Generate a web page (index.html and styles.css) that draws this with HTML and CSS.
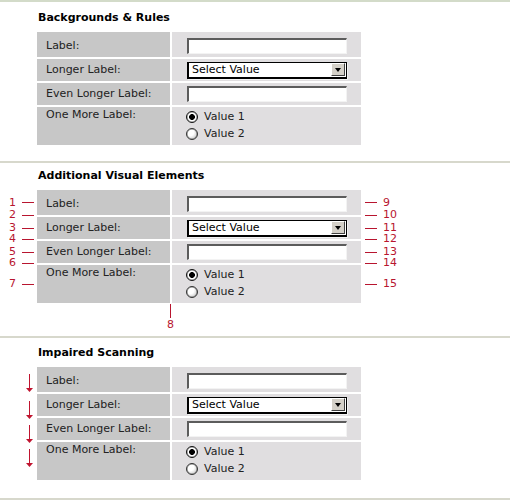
FILE: index.html
```html
<!DOCTYPE html>
<html lang="en">
<head>
<meta charset="utf-8">
<title>Form Layouts</title>
<link rel="stylesheet" href="styles.css">
</head>
<body>

<section class="block block--first">
  <h2 class="title">Backgrounds &amp; Rules</h2>
  <div class="form">
    <div class="row row--first">
      <div class="cell label">Label:</div>
      <div class="cell value"><input class="text" type="text"></div>
    </div>
    <div class="row">
      <div class="cell label">Longer Label:</div>
      <div class="cell value"><span class="select"><select><option>Select Value</option></select><span class="select-btn"></span></span></div>
    </div>
    <div class="row">
      <div class="cell label">Even Longer Label:</div>
      <div class="cell value"><input class="text" type="text"></div>
    </div>
    <div class="row row--last">
      <div class="cell label">One More Label:</div>
      <div class="cell value">
        <label class="radio-line"><input class="radio" type="radio" name="r1" checked>Value 1</label>
        <label class="radio-line"><input class="radio" type="radio" name="r1">Value 2</label>
      </div>
    </div>
  </div>
</section>

<section class="block block--annotated">
  <h2 class="title">Additional Visual Elements</h2>
  <div class="form">
    <div class="row row--first">
      <div class="cell label">Label:</div>
      <div class="cell value"><input class="text" type="text"></div>
      <span class="note note--l note--mid"><span class="num">1</span><span class="dash"></span></span>
      <span class="note note--l note--sep"><span class="num">2</span><span class="dash"></span></span>
      <span class="note note--r note--mid"><span class="dash"></span><span class="num">9</span></span>
      <span class="note note--r note--sep"><span class="dash"></span><span class="num">10</span></span>
    </div>
    <div class="row">
      <div class="cell label">Longer Label:</div>
      <div class="cell value"><span class="select"><select><option>Select Value</option></select><span class="select-btn"></span></span></div>
      <span class="note note--l note--mid"><span class="num">3</span><span class="dash"></span></span>
      <span class="note note--l note--sep"><span class="num">4</span><span class="dash"></span></span>
      <span class="note note--r note--mid"><span class="dash"></span><span class="num">11</span></span>
      <span class="note note--r note--sep"><span class="dash"></span><span class="num">12</span></span>
    </div>
    <div class="row">
      <div class="cell label">Even Longer Label:</div>
      <div class="cell value"><input class="text" type="text"></div>
      <span class="note note--l note--mid"><span class="num">5</span><span class="dash"></span></span>
      <span class="note note--l note--sep"><span class="num">6</span><span class="dash"></span></span>
      <span class="note note--r note--mid"><span class="dash"></span><span class="num">13</span></span>
      <span class="note note--r note--sep"><span class="dash"></span><span class="num">14</span></span>
    </div>
    <div class="row row--last">
      <div class="cell label">One More Label:</div>
      <div class="cell value">
        <label class="radio-line"><input class="radio" type="radio" name="r2" checked>Value 1</label>
        <label class="radio-line"><input class="radio" type="radio" name="r2">Value 2</label>
      </div>
      <span class="note note--l note--mid"><span class="num">7</span><span class="dash"></span></span>
      <span class="note note--r note--mid"><span class="dash"></span><span class="num">15</span></span>
    </div>
    <span class="mark-col"><span class="vline"></span><span class="num">8</span></span>
  </div>
</section>

<section class="block block--last">
  <h2 class="title">Impaired Scanning</h2>
  <div class="form">
    <div class="row row--first">
      <div class="cell label">Label:</div>
      <div class="cell value"><input class="text" type="text"></div>
      <svg class="arrow" viewBox="0 0 7 18" aria-hidden="true"><rect x="3" y="0" width="1" height="16"/><polygon points="0,14 7,14 3.5,18"/></svg>
    </div>
    <div class="row">
      <div class="cell label">Longer Label:</div>
      <div class="cell value"><span class="select"><select><option>Select Value</option></select><span class="select-btn"></span></span></div>
      <svg class="arrow" viewBox="0 0 7 18" aria-hidden="true"><rect x="3" y="0" width="1" height="16"/><polygon points="0,14 7,14 3.5,18"/></svg>
    </div>
    <div class="row">
      <div class="cell label">Even Longer Label:</div>
      <div class="cell value"><input class="text" type="text"></div>
      <svg class="arrow" viewBox="0 0 7 18" aria-hidden="true"><rect x="3" y="0" width="1" height="16"/><polygon points="0,14 7,14 3.5,18"/></svg>
    </div>
    <div class="row row--last">
      <div class="cell label">One More Label:</div>
      <div class="cell value">
        <label class="radio-line"><input class="radio" type="radio" name="r3" checked>Value 1</label>
        <label class="radio-line"><input class="radio" type="radio" name="r3">Value 2</label>
      </div>
      <svg class="arrow" viewBox="0 0 7 18" aria-hidden="true"><rect x="3" y="0" width="1" height="16"/><polygon points="0,14 7,14 3.5,18"/></svg>
    </div>
  </div>
</section>

</body>
</html>
```

FILE: styles.css
```css
* { box-sizing: border-box; }

body {
  margin: 0;
  background: #fff;
  color: #222;
  font-family: "DejaVu Sans", Verdana, sans-serif;
  font-size: 11px;
  line-height: 14px;
}

.block {
  border-top: 2px solid #d7d8cc;
  padding: 8px 0 16px 37px;
}
.block--first {
  border-top-color: #d3dbc9;
  padding-top: 9px;
}
.block--annotated {
  padding-top: 6px;
  padding-bottom: 33px;
}
.block--last {
  border-bottom: 2px solid #d7d8cc;
  padding-bottom: 18px;
}

.title {
  margin: 0 0 7px 1px;
  font-size: 11px;
  line-height: 14px;
  font-weight: bold;
  color: #000;
}

.form {
  position: relative;
  width: 324px;
  display: grid;
  row-gap: 2px;
}

.row {
  position: relative;
  display: grid;
  grid-template-columns: 133px 189px;
  column-gap: 2px;
  height: 22px;
}
.row--first { height: 25px; }
.row--last { height: 38px; }

.cell {
  display: flex;
  align-items: center;
}
.row--first .cell { padding-top: 3px; }

.label {
  background: #c7c7c7;
  padding-left: 9px;
  color: #222;
}
.value {
  background: #e0dee0;
  padding-left: 15px;
}

.row--last .label {
  align-items: flex-start;
  padding-top: 1px;
}
.row--last .value {
  flex-direction: column;
  align-items: flex-start;
  padding-top: 1px;
  padding-left: 14px;
}

/* text input */
.text {
  width: 160px;
  height: 16px;
  margin: 0;
  padding: 0;
  border-style: solid;
  border-width: 2px 1px 1px 2px;
  border-color: #5c5c5c #f3f3f3 #f3f3f3 #5c5c5c;
  background: #fff;
  font: inherit;
}

/* select */
.select {
  position: relative;
  display: block;
  width: 160px;
  height: 17px;
}
.select select {
  appearance: none;
  -webkit-appearance: none;
  display: block;
  width: 100%;
  height: 17px;
  margin: 0;
  padding: 0 0 0 3px;
  border-style: solid;
  border-color: #000;
  border-width: 1px 1px 2px 2px;
  border-radius: 0;
  box-shadow: 1px 1px 0 #f2f2f2;
  background: #fff;
  color: #000;
  font-family: "DejaVu Sans", Verdana, sans-serif;
  font-size: 11px;
  line-height: 14px;
}
.select-btn {
  position: absolute;
  right: 2px;
  top: 1px;
  width: 14px;
  height: 13px;
  display: flex;
  align-items: center;
  justify-content: center;
  background: #d4d0c8;
  border-style: solid;
  border-width: 1px;
  border-color: #fff #404040 #404040 #fff;
}
.select-btn::after {
  content: "";
  width: 0;
  height: 0;
  border-left: 3.5px solid transparent;
  border-right: 3.5px solid transparent;
  border-top: 4px solid #000;
  margin-top: 1px;
}

/* radios */
.radio-line {
  display: flex;
  align-items: center;
  height: 17px;
  line-height: 17px;
  color: #222;
}
.radio {
  appearance: none;
  -webkit-appearance: none;
  width: 12px;
  height: 12px;
  margin: 0 6px 0 0;
  border: 1px solid #333;
  border-radius: 50%;
  background: radial-gradient(circle at 35% 35%, #ffffff 0, #ffffff 35%, #b4b4b4 100%);
  box-shadow: inset 0 0 0 0.5px #808080;
}
.radio:checked {
  background: radial-gradient(circle, #000 0, #000 2.6px, #fff 3.2px);
  border-color: #111;
}

/* annotations */
.note {
  position: absolute;
  display: flex;
  align-items: center;
  height: 10px;
  color: #b8152f;
  font-size: 11px;
  line-height: 10px;
  transform: translateY(-50%);
}
.note--l { left: -28px; }
.note--r { left: calc(100% + 4px); }
.note--mid { top: 50%; }
.note--sep { top: 100%; }

.note--l .num {
  width: 7px;
  margin-right: 6px;
  text-align: right;
}
.note--r .num { margin-left: 6px; }

.dash {
  width: 12px;
  height: 1px;
  background: currentColor;
}

.mark-col {
  position: absolute;
  top: 100%;
  left: 129px;
  width: 9px;
  display: flex;
  flex-direction: column;
  align-items: center;
  color: #b8152f;
  line-height: 13px;
}
.vline {
  width: 1px;
  height: 14px;
  margin-top: 1px;
  background: currentColor;
}

.arrow {
  position: absolute;
  left: -11px;
  top: 7px;
  width: 7px;
  height: 18px;
  fill: #c0142f;
}
```
